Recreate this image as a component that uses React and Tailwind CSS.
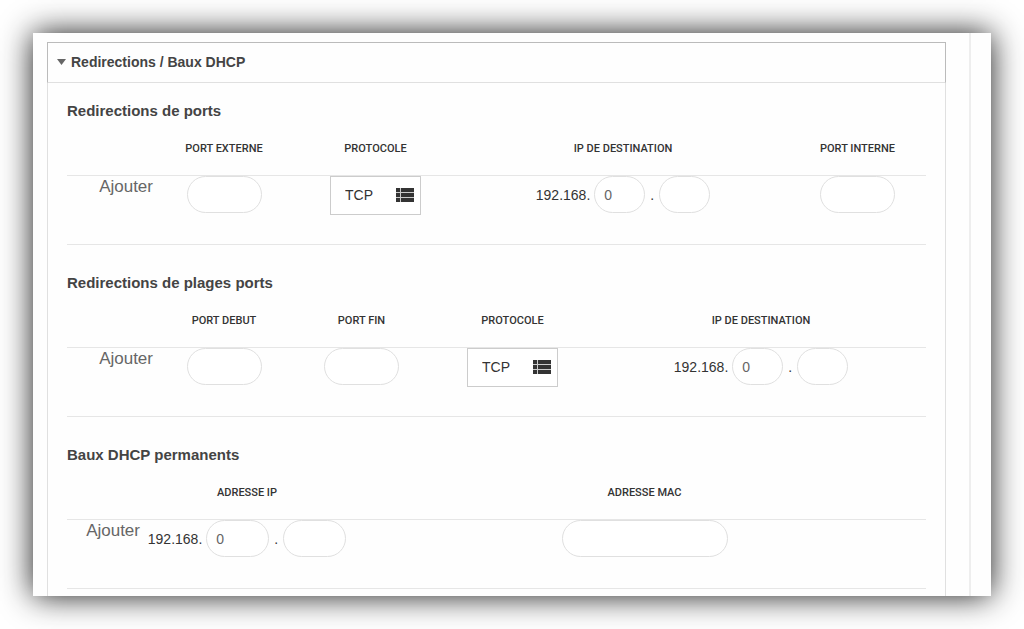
import React, { useState } from 'react';

const protocols = ['TCP', 'UDP'];

function ListIcon() {
  return (
    <svg className="w-[18px] h-[14px] text-[#333]" viewBox="0 0 18 14" fill="currentColor" shapeRendering="crispEdges" aria-hidden="true">
      <path d="M0 0h4v4H0zM5 0h13v4H5zM0 5h4v4H0zM5 5h13v4H5zM0 10h4v4H0zM5 10h13v4H5z" />
      <path d="M4 0h1v14H4zM0 4h18v1H0zM0 9h18v1H0z" fillOpacity="0.25" />
    </svg>
  );
}

function PillInput({ className, ...props }) {
  return (
    <input
      type="text"
      className={`h-[37px] px-[9px] rounded-full border border-[#e0e0e0] bg-white text-sm text-[#666] outline-none focus:border-gray-400 ${className}`}
      {...props}
    />
  );
}

function ProtocolSelect() {
  return (
    <div className="relative mx-auto w-[91px]">
      <select
        aria-label="Protocole"
        className="block w-full h-[39px] pl-[14px] pb-px appearance-none border border-[#ccc] bg-white text-sm text-[#333] outline-none"
      >
        {protocols.map((p) => (
          <option key={p}>{p}</option>
        ))}
      </select>
      <span className="absolute inset-y-0 right-[7px] pb-0.5 flex items-center pointer-events-none">
        <ListIcon />
      </span>
    </div>
  );
}

function IpFields({ inputClass }) {
  return (
    <div className="flex items-center justify-center gap-1 text-sm text-[#333]">
      <span>192.168.</span>
      <PillInput className={inputClass} defaultValue="0" aria-label="Troisième octet" />
      <span className="px-px">.</span>
      <PillInput className={inputClass} aria-label="Quatrième octet" />
    </div>
  );
}

function Section({ title, columns, children }) {
  return (
    <section>
      <h2 className="text-[15px] leading-6 font-bold text-[#444]">{title}</h2>
      <table className="w-full table-fixed border-separate border-spacing-0">
        <thead>
          <tr>
            {columns.map((col, index) => (
              <th
                key={index}
                className={`h-[53px] p-0 border-b border-[#e6e6e6] font-[Roboto,sans-serif] text-[11px] font-medium uppercase text-[#333] ${col.className}`}
              >
                {col.label}
              </th>
            ))}
          </tr>
        </thead>
        <tbody>
          <tr>
            <td className="h-[69px] p-0 pt-px pr-px border-b border-[#e6e6e6] align-top text-right">
              <button type="button" className="block ml-auto text-[17px] leading-5 text-[#666]">Ajouter</button>
            </td>
            {React.Children.map(children, (child, index) => (
              <td className={`h-[69px] p-0 border-b border-[#e6e6e6] align-top text-center ${columns[index + 1].cellClass || ''}`}>
                {child}
              </td>
            ))}
          </tr>
        </tbody>
      </table>
    </section>
  );
}

function App() {
  const [open, setOpen] = useState(true);

  return (
    <div className="min-h-screen flex bg-white p-[33px] font-['Liberation_Sans',Arial,sans-serif]">
      <main className="flex-1 min-w-0 flex bg-[#fefefe] shadow-[0_0_30px_rgba(0,0,0,0.9)]">
        <div className="flex-1 min-w-0 flex flex-col pt-[9px] pl-[14px] pr-[23px] border-r-2 border-[#eee]">
          <button
            type="button"
            aria-expanded={open}
            onClick={() => setOpen(!open)}
            className="flex items-center gap-[5px] h-[41px] px-[9px] pb-px border border-[#bbb] border-b-[#e0e0e0] text-sm font-bold text-[#444]"
          >
            <svg className="w-[9px] h-[6px] text-[#666]" viewBox="0 0 9 6" fill="currentColor" aria-hidden="true">
              <path d="M0 0h9L4.5 6z" />
            </svg>
            Redirections / Baux DHCP
          </button>

          <div className="flex-1 px-[19px] pt-4 pb-[7px] border-x border-[#e0e0e0]">
            {open && (
              <div className="flex flex-col gap-[26px]">
                <Section
                  title="Redirections de ports"
                  columns={[
                    { label: '', className: 'w-[87px]' },
                    { label: 'Port externe', className: 'w-[140px]' },
                    { label: 'Protocole', className: 'w-[163px]' },
                    { label: 'IP de destination', className: '' },
                    { label: 'Port interne', className: 'w-[137px]' },
                  ]}
                >
                  <PillInput className="w-[75px]" aria-label="Port externe" />
                  <ProtocolSelect />
                  <IpFields inputClass="w-[51px]" />
                  <PillInput className="w-[75px]" aria-label="Port interne" />
                </Section>

                <Section
                  title="Redirections de plages ports"
                  columns={[
                    { label: '', className: 'w-[87px]' },
                    { label: 'Port debut', className: 'w-[140px]' },
                    { label: 'Port fin', className: 'w-[135px]' },
                    { label: 'Protocole', className: 'w-[167px]' },
                    { label: 'IP de destination', className: '' },
                  ]}
                >
                  <PillInput className="w-[75px]" aria-label="Port debut" />
                  <PillInput className="w-[75px]" aria-label="Port fin" />
                  <ProtocolSelect />
                  <IpFields inputClass="w-[51px]" />
                </Section>

                <Section
                  title="Baux DHCP permanents"
                  columns={[
                    { label: '', className: 'w-[74px]' },
                    { label: 'Adresse IP', className: 'w-[212px]' },
                    { label: 'Adresse MAC', className: 'pl-2.5', cellClass: 'pl-2.5' },
                  ]}
                >
                  <IpFields inputClass="w-[63px]" />
                  <PillInput className="w-[166px]" aria-label="Adresse MAC" />
                </Section>
              </div>
            )}
          </div>
        </div>
        <div className="w-5" />
      </main>
    </div>
  );
}

export default App;
